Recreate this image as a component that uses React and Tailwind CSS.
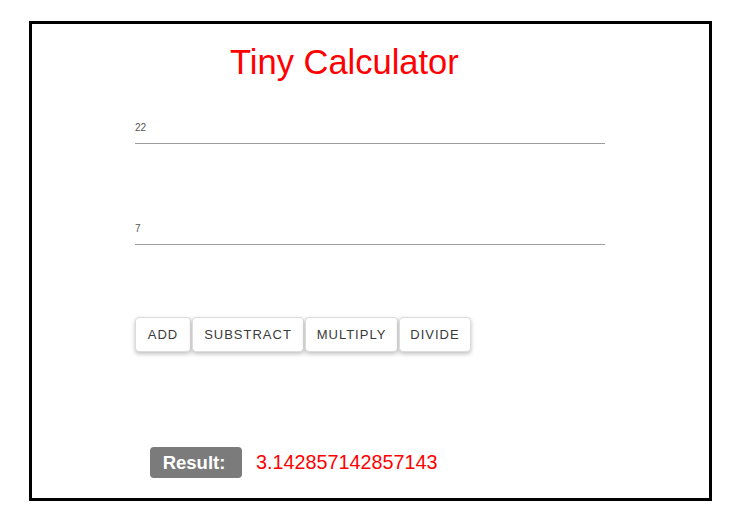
export default function App() {
  const buttons = [
    { label: "ADD", w: "w-[56px]" },
    { label: "SUBSTRACT", w: "w-[112px]" },
    { label: "MULTIPLY", w: "w-[93px]" },
    { label: "DIVIDE", w: "w-[72px]" },
  ];
  return (
    <div className="bg-white w-[736px] h-[519px] pt-[21px] pl-[29px]" style={{ fontFamily: '"Liberation Sans", Arial, sans-serif' }}>
      <div className="w-[683px] h-[480px] border-[3px] border-black flex flex-col">
        <div className="ml-[198px] mt-[21px] text-[34.5px] leading-[35px] text-[#ff0000]">Tiny Calculator</div>
        <div className="ml-[103px] mt-[43px] w-[470px] border-b border-[#9e9e9e] pb-[10px] text-[10px] leading-[10px] text-[#555]">22</div>
        <div className="ml-[103px] mt-[80px] w-[470px] border-b border-[#9e9e9e] pb-[10px] text-[10px] leading-[10px] text-[#555]">7</div>
        <div className="ml-[103px] mt-[72px] flex gap-[1px]">
          {buttons.map((b) => (
            <button
              key={b.label}
              className={`${b.w} h-[35px] flex items-center justify-center rounded-[4px] border border-[#dcdcdc] bg-white text-[13px] tracking-[1px] text-[#3a3a3a] shadow-[0_2px_4px_rgba(0,0,0,0.25)]`}
            >
              {b.label}
            </button>
          ))}
        </div>
        <div className="ml-[118px] mt-[95px] flex items-center">
          <div className="w-[92px] h-[31px] rounded-[4px] bg-[#7b7b7b] flex items-center justify-center text-white font-bold text-[18.5px] pr-[4px]">Result:</div>
          <div className="ml-[14px] text-[19.8px] text-[#ff0000]">3.142857142857143</div>
        </div>
      </div>
    </div>
  );
}
